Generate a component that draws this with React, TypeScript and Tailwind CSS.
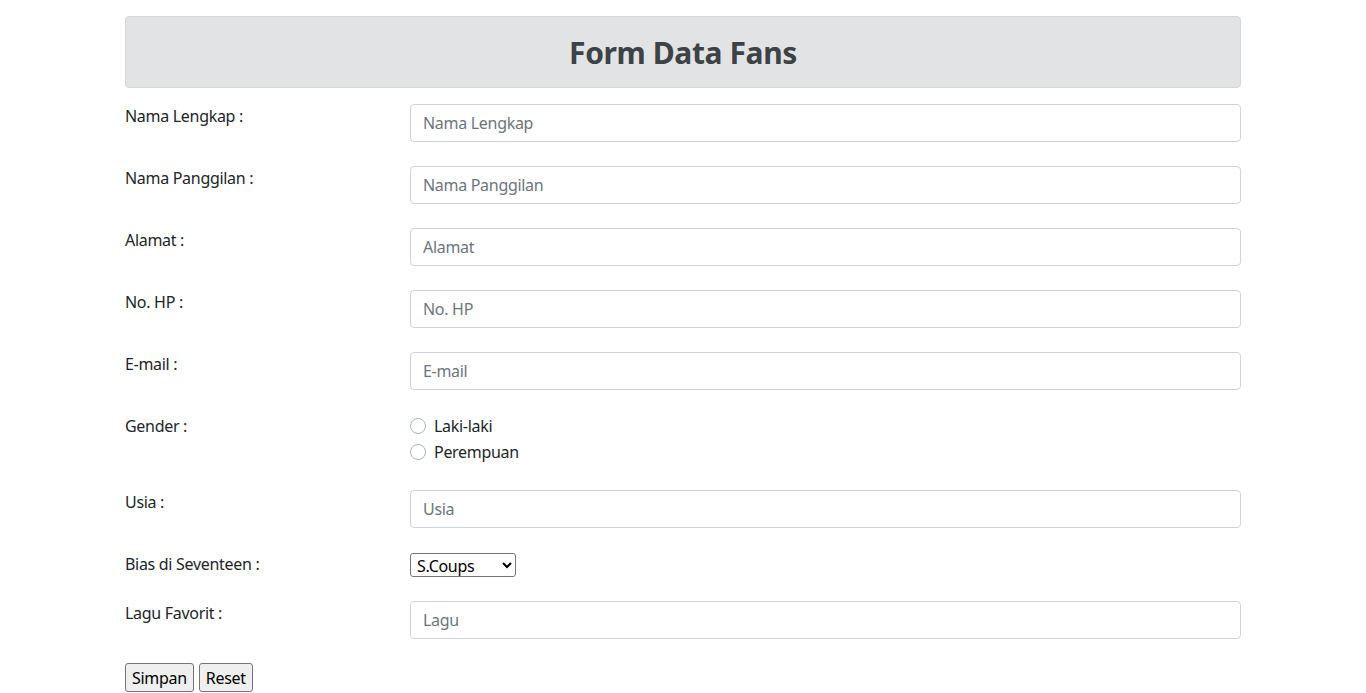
import React from 'react';

const fields = [
  { label: 'Nama Lengkap :', placeholder: 'Nama Lengkap' },
  { label: 'Nama Panggilan :', placeholder: 'Nama Panggilan' },
  { label: 'Alamat :', placeholder: 'Alamat' },
  { label: 'No. HP :', placeholder: 'No. HP' },
  { label: 'E-mail :', placeholder: 'E-mail' },
];

const TextRow = ({ label, placeholder }: { label: string; placeholder: string }) => (
  <div className="flex mb-6">
    <label className="w-[285px] shrink-0 leading-6">{label}</label>
    <input
      type="text"
      placeholder={placeholder}
      className="flex-1 h-[38px] px-3 border border-[#ced4da] rounded-[4px] bg-white text-[#495057] placeholder:text-[#6c757d] outline-none"
    />
  </div>
);

export default function App() {
  return (
    <div className="min-h-screen bg-white text-[16px] tracking-[-0.3px] text-[#212529] font-['Noto_Sans',sans-serif]">
      <div className="w-[1116px] mx-auto pt-4">
        {/* Header */}
        <div className="h-[72px] flex items-center justify-center bg-[#e2e3e5] border border-[#d6d8db] rounded-[4px]">
          <h2 className="text-[30px] font-bold leading-[38px] tracking-[-0.4px] text-[#3d4246] mt-[2px]">Form Data Fans</h2>
        </div>

        <form className="mt-4" onSubmit={(e) => e.preventDefault()}>
          {fields.map((f) => (
            <TextRow key={f.label} label={f.label} placeholder={f.placeholder} />
          ))}

          {/* Gender */}
          <div className="flex mb-6">
            <label className="w-[285px] shrink-0 leading-6">Gender :</label>
            <div className="flex flex-col">
              {['Laki-laki', 'Perempuan'].map((g) => (
                <label key={g} className="flex items-center gap-2 leading-6 mb-[2px]">
                  <span className="w-4 h-4 rounded-full border border-[#adb5bd] bg-white" />
                  {g}
                </label>
              ))}
            </div>
          </div>

          <TextRow label="Usia :" placeholder="Usia" />

          {/* Bias */}
          <div className="flex mb-6">
            <label className="w-[285px] shrink-0 leading-6">Bias di Seventeen :</label>
            <select className="w-[106px] h-[24px] mt-px border border-[#767676] rounded-[3px] bg-white text-black px-[2px] leading-5">
              <option>S.Coups</option>
              <option>Jeonghan</option>
              <option>Joshua</option>
              <option>Jun</option>
              <option>Hoshi</option>
              <option>Wonwoo</option>
              <option>Woozi</option>
              <option>DK</option>
              <option>Mingyu</option>
              <option>The8</option>
              <option>Seungkwan</option>
              <option>Vernon</option>
              <option>Dino</option>
            </select>
          </div>

          <TextRow label="Lagu Favorit :" placeholder="Lagu" />

          <div className="flex gap-[5px]">
            <button type="submit" className="h-[29px] px-[6px] border border-[#767676] rounded-[3px] bg-[#efefef] text-black">
              Simpan
            </button>
            <button type="reset" className="h-[29px] px-[6px] border border-[#767676] rounded-[3px] bg-[#efefef] text-black">
              Reset
            </button>
          </div>
        </form>
      </div>
    </div>
  );
}
